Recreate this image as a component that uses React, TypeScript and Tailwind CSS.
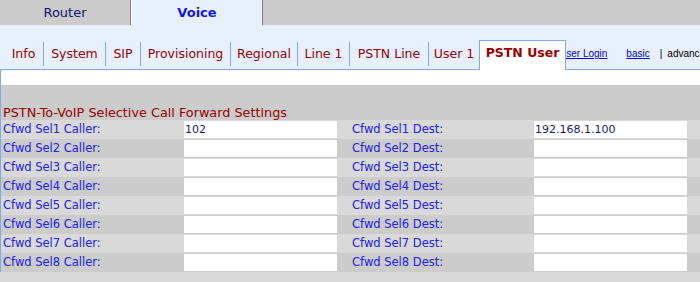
import React from "react";

const tabs = [
  { label: "Info", cls: "w-[40px] border-r" },
  { label: "System", cls: "w-[62px] border-r" },
  { label: "SIP", cls: "w-[35px] border-r" },
  { label: "Provisioning", cls: "w-[90px] border-r" },
  { label: "Regional", cls: "w-[67px] border-r" },
  { label: "Line 1", cls: "w-[52px] border-r" },
  { label: "PSTN Line", cls: "w-[79px] border-r" },
  { label: "User 1", cls: "w-[50px]" },
];

const rows = [
  { n: 1, a: "102", b: "192.168.1.100" },
  { n: 2, a: "", b: "" },
  { n: 3, a: "", b: "" },
  { n: 4, a: "", b: "" },
  { n: 5, a: "", b: "" },
  { n: 6, a: "", b: "" },
  { n: 7, a: "", b: "" },
  { n: 8, a: "", b: "" },
];

export default function App() {
  return (
    <div className="w-[700px] h-[282px] overflow-hidden bg-[#d9d9d9] font-['DejaVu_Sans',sans-serif] whitespace-nowrap">
      {/* top level tabs */}
      <div className="flex h-[25px] bg-[#cccccc]">
        <div className="shrink-0 w-[131px] h-full flex items-center justify-center border-r border-[#808080] bg-[#cccccc] text-[13px] text-[#14146e]">
          Router
        </div>
        <div className="shrink-0 w-[132px] h-full flex items-center justify-center border-l border-r border-l-white border-r-[#808080] bg-[#e8f0fd] text-[13px] font-bold text-[#1414ee]">
          Voice
        </div>
      </div>

      {/* sub tabs band */}
      <div className="h-[45px] bg-[#e8f0fd] border-b border-[#80a8ec] flex items-end pl-[4px]">
        {tabs.map((t) => (
          <div
            key={t.label}
            className={`${t.cls} shrink-0 h-[24px] mb-[3px] flex items-center justify-center border-[#80a8ec] text-[12.5px] text-[#990000]`}
          >
            {t.label}
          </div>
        ))}
        <div className="shrink-0 relative z-10 w-[87px] h-[30px] -mb-px flex justify-center pt-[4px] bg-white border border-b-0 border-[#80a8ec] text-[12.5px] leading-[15px] font-bold text-[#990000]">
          PSTN User
        </div>
        <div className="shrink-0 relative z-0 ml-[-7px] self-end mb-[9px] flex leading-[12px] text-[10px] font-['Liberation_Sans',Arial,sans-serif]">
          <span className="underline text-[#0000ee]">User Login</span>
          <span className="ml-[19px] underline text-[#0000ee]">basic</span>
          <span className="ml-[10px] text-black">|</span>
          <span className="ml-[5px] text-black">advanced</span>
        </div>
      </div>

      <div className="border-l border-[#80a8ec]">
        <div className="h-[15px] bg-white" />
        <div className="h-[35px] bg-[#cccccc] flex items-end pl-[2px] text-[12.8px] leading-[15px] text-[#990000]">
          PSTN-To-VoIP Selective Call Forward Settings
        </div>
        {rows.map((r) => (
          <div
            key={r.n}
            className={`grid grid-cols-[183px_153px_197px_153px_1fr] h-[19px] items-center text-[11.5px] ${
              r.n % 2 === 1 ? "bg-[#d9d9d9]" : "bg-[#cccccc]"
            }`}
          >
            <div className="pl-[2px] text-[#2020f0]">Cfwd Sel{r.n} Caller:</div>
            <input
              readOnly
              value={r.a}
              className="w-full h-[17px] bg-white border-0 outline-none px-[1px] text-[11px] text-[#1a1a70] font-['DejaVu_Sans',sans-serif]"
            />
            <div className="pl-[15px] text-[#2020f0]">Cfwd Sel{r.n} Dest:</div>
            <input
              readOnly
              value={r.b}
              className="w-full h-[17px] bg-white border-0 outline-none px-[1px] text-[11px] text-[#1a1a70] font-['DejaVu_Sans',sans-serif]"
            />
            <div />
          </div>
        ))}
      </div>
    </div>
  );
}
